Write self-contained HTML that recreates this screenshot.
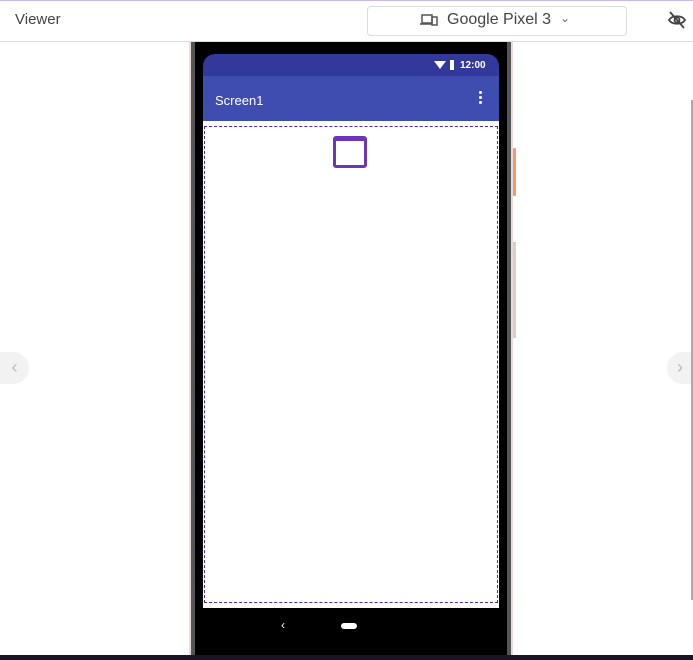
<!DOCTYPE html>
<html><head><style>
body{margin:0;width:693px;height:660px;overflow:hidden;background:#fff;font-family:"Liberation Sans",sans-serif;position:relative}
.a{position:absolute}
</style></head><body>
<div class="a" style="left:0;top:0;width:693px;height:1px;background:#c9b8e8"></div>
<div class="a" style="left:15px;top:11px;font-size:15px;color:#444">Viewer</div>
<div class="a" style="left:367px;top:6px;width:258px;height:28px;border:1px solid #ddd;border-radius:4px"></div>
<svg class="a" style="left:420px;top:13px" width="18" height="14" viewBox="0 0 18 14"><path d="M2 2h10v8H2z M0 11h12" fill="none" stroke="#555" stroke-width="1.5"/><rect x="12" y="4" width="5" height="8" fill="none" stroke="#555" stroke-width="1.5"/></svg>
<div class="a" style="left:447px;top:11px;font-size:16px;color:#444">Google Pixel 3</div>
<div class="a" style="left:560px;top:11px;font-size:12px;color:#666">&#8964;</div>
<svg class="a" style="left:667px;top:11px" width="20" height="18" viewBox="0 0 20 18"><path d="M2 9c3-5 13-5 16 0c-3 5-13 5-16 0z" fill="none" stroke="#444" stroke-width="1.8"/><circle cx="10" cy="9" r="2.5" fill="none" stroke="#444" stroke-width="1.8"/><path d="M3 1l14 16" stroke="#444" stroke-width="1.8"/></svg>
<div class="a" style="left:0;top:41px;width:693px;height:1px;background:#ddd"></div>

<div class="a" style="left:189px;top:42px;width:324px;height:613px;background:#e6dcd9"></div>
<div class="a" style="left:191px;top:42px;width:320px;height:613px;background:#555"></div>
<div class="a" style="left:195px;top:42px;width:312px;height:613px;background:#000"></div>
<div class="a" style="left:513px;top:148px;width:3px;height:48px;background:#f09a6e;border-radius:1px"></div>
<div class="a" style="left:513px;top:242px;width:3px;height:96px;background:#d8cccc"></div>
<div class="a" style="left:203px;top:54px;width:296px;height:590px;background:#000;border-radius:12px;overflow:hidden">
 <div class="a" style="left:0;top:0;width:296px;height:22px;background:#32399b"></div>
 <div class="a" style="left:257px;top:6px;font-size:10px;font-weight:bold;color:#fff">12:00</div>
 <div class="a" style="left:231px;top:7px;width:0;height:0;border-left:6px solid transparent;border-right:6px solid transparent;border-top:8px solid #fff"></div>
 <div class="a" style="left:247px;top:6px;width:4px;height:10px;background:#fff"></div>
 <div class="a" style="left:0;top:22px;width:296px;height:45px;background:#3f4db0;box-shadow:0 2px 3px rgba(0,0,0,.3)"></div>
 <div class="a" style="left:12px;top:39px;font-size:13px;color:#fff">Screen1</div>
 <div class="a" style="left:276px;top:37px;width:3px;height:3px;background:#fff;border-radius:2px;box-shadow:0 5px #fff,0 10px #fff"></div>
 <div class="a" style="left:0;top:67px;width:296px;height:487px;background:#fff"></div>
 <div class="a" style="left:1px;top:72px;width:292px;height:475px;border:1px dashed #4a2aa8"></div>
 <div class="a" style="left:130px;top:82px;width:28px;height:24px;border:3px solid #6d35b8;border-top-width:5px;border-radius:3px"></div>
 <div class="a" style="left:78px;top:564px;color:#fff;font-size:12px">&#8249;</div>
 <div class="a" style="left:138px;top:569px;width:16px;height:6px;background:#fff;border-radius:3px"></div>
</div>
<div class="a" style="left:0;top:655px;width:693px;height:5px;background:#1a1424"></div>
<div class="a" style="left:0;top:352px;width:29px;height:32px;background:#f2f2f2;border-radius:0 16px 16px 0;color:#bbb;font-size:18px;line-height:30px;text-align:center">&#8249;</div>
<div class="a" style="left:667px;top:352px;width:26px;height:32px;background:#f2f2f2;border-radius:16px 0 0 16px;color:#bbb;font-size:18px;line-height:30px;text-align:center">&#8250;</div>
<div class="a" style="left:691px;top:100px;width:2px;height:500px;background:#aaa"></div>
</body></html>
